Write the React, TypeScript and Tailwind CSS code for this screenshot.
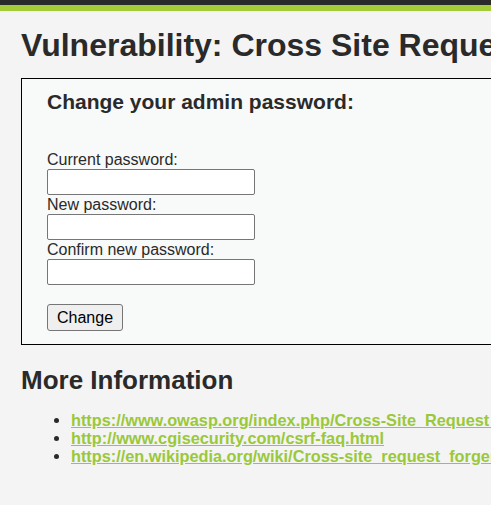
export default function App() {
  return (
    <div className="min-h-[505px] bg-[#f4f4f4] font-['Liberation_Sans',Arial,sans-serif] text-[#2a2a2a] overflow-hidden">
      <div className="h-[5px] bg-[#2a2a2a]" />
      <div className="h-[6px] bg-[#a4cb38]" />

      <div className="pl-[21px] w-[900px]">
        <h1 className="text-[32px] leading-[37px] font-bold mt-[16px] mb-[14px] whitespace-nowrap">
          Vulnerability: Cross Site Request Forgery (CSRF)
        </h1>

        <div className="border border-black bg-[#f8f9f9] pl-[25px] pt-[11px] pb-[13px]">
          <form onSubmit={(e) => e.preventDefault()}>
            <h3 className="text-[21px] leading-[24px] font-bold mb-[37px]">
              Change your admin password:
            </h3>
            <label className="block text-base leading-[18px]">Current password:</label>
            <input
              type="password"
              className="block w-[208px] h-[26px] bg-white border border-[#767676] rounded-[2px]"
            />
            <label className="block text-base leading-[19px]">New password:</label>
            <input
              type="password"
              className="block w-[208px] h-[26px] bg-white border border-[#767676] rounded-[2px]"
            />
            <label className="block text-base leading-[19px]">Confirm new password:</label>
            <input
              type="password"
              className="block w-[208px] h-[26px] bg-white border border-[#767676] rounded-[2px]"
            />
            <button
              type="submit"
              className="mt-[19px] h-[27px] px-[9px] text-base bg-[#efefef] border border-[#767676] rounded-[3px] text-black"
            >
              Change
            </button>
          </form>
        </div>

        <h2 className="text-[26px] leading-[29px] font-bold mt-[21px] mb-[16px]">More Information</h2>
        <ul className="list-disc pl-[50px] text-[16.3px] leading-[18px] font-bold">
          <li>
            <a href="#" className="text-[#9ac83a] underline">
              https://www.owasp.org/index.php/Cross-Site_Request_Forgery
            </a>
          </li>
          <li>
            <a href="#" className="text-[#9ac83a] underline">
              http://www.cgisecurity.com/csrf-faq.html
            </a>
          </li>
          <li>
            <a href="#" className="text-[#9ac83a] underline">
              https://en.wikipedia.org/wiki/Cross-site_request_forgery
            </a>
          </li>
        </ul>
      </div>
    </div>
  );
}
